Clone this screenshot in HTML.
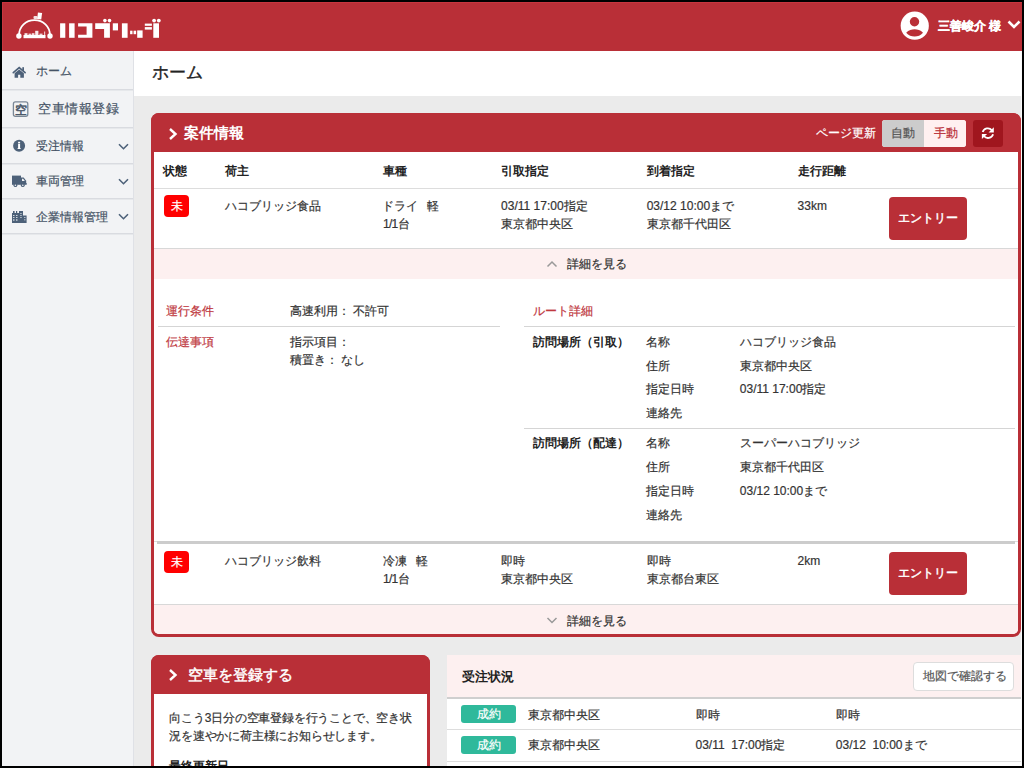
<!DOCTYPE html>
<html lang="ja"><head><meta charset="utf-8"><title>ホーム</title>
<style>
html,body{margin:0;padding:0;width:1024px;height:768px;overflow:hidden;background:#000}
body{position:relative;font-family:"Liberation Sans",sans-serif}
body>div{position:absolute}
.t{position:absolute;line-height:20px;white-space:nowrap;-webkit-text-stroke:0.2px}
</style></head><body>
<div style="left:0px;top:0px;width:1024px;height:768px;background:#ebebeb"></div>
<div style="left:0px;top:0px;width:1024px;height:51px;background:#b92f37"></div>
<div style="left:2px;top:2px;width:1020px;height:1px;background:#c8363f"></div>
<div style="left:2px;top:2px;width:1px;height:49px;background:#c8363f"></div>
<div style="left:0px;top:51px;width:133px;height:717px;background:#f2f3f5"></div>
<div style="left:133px;top:51px;width:1px;height:717px;background:#dfe1e6"></div>
<div style="left:2px;top:89px;width:131px;height:1px;background:#d9dbe0"></div>
<div style="left:2px;top:90px;width:131px;height:1px;background:#e6e8eb"></div>
<div style="left:2px;top:127px;width:131px;height:1px;background:#d9dbe0"></div>
<div style="left:2px;top:128px;width:131px;height:1px;background:#e6e8eb"></div>
<div style="left:2px;top:163px;width:131px;height:1px;background:#d9dbe0"></div>
<div style="left:2px;top:164px;width:131px;height:1px;background:#e6e8eb"></div>
<div style="left:2px;top:198px;width:131px;height:1px;background:#d9dbe0"></div>
<div style="left:2px;top:199px;width:131px;height:1px;background:#e6e8eb"></div>
<div style="left:2px;top:233px;width:131px;height:1px;background:#d9dbe0"></div>
<div style="left:2px;top:234px;width:131px;height:1px;background:#e6e8eb"></div>
<div style="left:134px;top:51px;width:890px;height:45px;background:#fff"></div>
<svg style="position:absolute;left:0px;top:0px" width="170" height="50" viewBox="0 0 170 50"><path d="M19 35.5 C19 26 26 20.2 34.5 20.2 C43 20.2 50 26 50 35.5" fill="none" stroke="#fff" stroke-width="1.8"/><circle cx="18.9" cy="36" r="2.7" fill="#fff"/><circle cx="50" cy="36" r="2.7" fill="#fff"/><rect x="23.5" y="35" width="22" height="3.2" fill="#fff"/><rect x="24.5" y="33.2" width="3" height="2" fill="#fff" opacity=".9"/><rect x="28.5" y="33.6" width="3" height="1.6" fill="#fff" opacity=".8"/><rect x="32" y="33.2" width="2.5" height="2" fill="#fff" opacity=".85"/><rect x="35.2" y="30.8" width="3.2" height="4.5" fill="#fff" opacity=".9"/><rect x="39.5" y="33.6" width="3" height="1.6" fill="#fff" opacity=".8"/><rect x="44" y="31.5" width="1.2" height="3.8" fill="#fff" opacity=".7"/><rect x="37.5" y="12.8" width="4.2" height="6.5" fill="#fff" transform="rotate(8 39.6 16)"/><rect x="33.5" y="16" width="4" height="3" rx="1" fill="#fff" opacity=".85"/><rect x="60.1" y="23.3" width="5.2" height="14.5" fill="#fff"/><rect x="69.1" y="23.3" width="5.5" height="14.5" fill="#fff"/><path d="M78.1 23.3 H92.4 V37.8 H78.1 V34.8 H86.6 V26.6 H78.1 Z" fill="#fff"/><path d="M95.2 23.3 H109.9 V37.8 H104.1 V29 H95.2 Z" fill="#fff"/><circle cx="104.9" cy="20.6" r="1.8" fill="#fff"/><circle cx="109.5" cy="20.6" r="1.8" fill="#fff"/><rect x="112.8" y="23.3" width="5.2" height="7.1" fill="#fff"/><rect x="121.9" y="23.3" width="5.7" height="14.5" fill="#fff"/><rect x="130.1" y="30.7" width="2.4" height="3.5" fill="#fff"/><rect x="133.6" y="30.7" width="2.5" height="3.5" fill="#fff"/><rect x="137.2" y="30.4" width="5.4" height="7.4" fill="#fff"/><rect x="144.8" y="23.6" width="7.1" height="2.2" fill="#fff"/><rect x="144.8" y="27.1" width="7.1" height="2.5" fill="#fff"/><rect x="153.3" y="23.3" width="5.7" height="14.5" fill="#fff"/><circle cx="154.1" cy="20.6" r="1.9" fill="#fff"/><circle cx="158.8" cy="20.6" r="1.9" fill="#fff"/></svg>
<svg style="position:absolute;left:895px;top:6px" width="40" height="40" viewBox="0 0 40 40"><circle cx="19.75" cy="19.7" r="14.1" fill="#fff"/><circle cx="19.5" cy="15.8" r="4.7" fill="#b92f37"/><path d="M11.2 26.7 C13.5 24 17 23.3 19.6 23.3 C22.2 23.3 25.7 24 28 26.7 C25.6 29.6 22.8 30.4 19.6 30.4 C16.4 30.4 13.6 29.6 11.2 26.7 Z" fill="#b92f37"/></svg>
<div class="t" style="left:937.8px;top:15.5px;font-size:12px;color:#fff;font-weight:bold;-webkit-text-stroke:0;-webkit-text-stroke:0.3px;">三善峻介 様</div>
<svg style="position:absolute;left:1004px;top:18px" width="20" height="14" viewBox="0 0 20 14"><path d="M4.5 3.5 L10 9 L15.5 3.5" fill="none" stroke="#fff" stroke-width="2.6"/></svg>
<svg style="position:absolute;left:8px;top:60px" width="24" height="24" viewBox="0 0 24 24"><path d="M5.3 12.6 L11.2 7.6 L17.1 12.6" fill="none" stroke="#4d6179" stroke-width="1.7" stroke-linecap="round"/><rect x="14.3" y="7.2" width="1.7" height="3.6" fill="#4d6179"/><path d="M6.6 13.2 L11.2 9.4 L15.9 13.2 V17.8 H12.3 V14.7 H10.1 V17.8 H6.6 Z" fill="#4d6179"/></svg>
<div class="t" style="left:36.3px;top:61.4px;font-size:12px;color:#465466;">ホーム</div>
<svg style="position:absolute;left:8px;top:96px" width="26" height="26" viewBox="0 0 26 26"><rect x="5.4" y="5.9" width="14.4" height="14.4" rx="2" fill="none" stroke="#7a8796" stroke-width="1.3"/></svg>
<div class="t" style="left:13.8px;top:99.8px;font-size:11.5px;color:#465466;width:13.6px;text-align:center;-webkit-text-stroke:0.5px;">空</div>
<div class="t" style="left:38.2px;top:98.5px;font-size:13px;color:#465466;letter-spacing:0.55px;">空車情報登録</div>
<svg style="position:absolute;left:8px;top:134px" width="24" height="24" viewBox="0 0 24 24"><circle cx="11.1" cy="11.7" r="6" fill="#4d6179"/><rect x="10.1" y="9.8" width="2" height="5" fill="#fff"/><rect x="10.1" y="7.8" width="2" height="1.5" fill="#fff"/><rect x="9.6" y="14" width="3" height="1" fill="#fff"/></svg>
<div class="t" style="left:36.1px;top:135.6px;font-size:12px;color:#465466;">受注情報</div>
<svg style="position:absolute;left:8px;top:170px" width="24" height="24" viewBox="0 0 24 24"><rect x="4" y="5.6" width="9" height="8.9" fill="#4d6179"/><path d="M13 7.6 H15.6 L18.2 10.8 V14.5 H13 Z" fill="#4d6179"/><path d="M14 8.8 H15.1 L16.8 10.9 H14 Z" fill="#f2f3f5"/><rect x="4" y="13.2" width="14.8" height="1.4" fill="#4d6179"/><circle cx="7.4" cy="15.2" r="1.9" fill="#4d6179"/><circle cx="7.4" cy="15.2" r=".8" fill="#f2f3f5"/><circle cx="14.8" cy="15.2" r="1.9" fill="#4d6179"/><circle cx="14.8" cy="15.2" r=".8" fill="#f2f3f5"/></svg>
<div class="t" style="left:36.1px;top:171.1px;font-size:12px;color:#465466;">車両管理</div>
<svg style="position:absolute;left:8px;top:205px" width="24" height="24" viewBox="0 0 24 24"><rect x="4" y="8" width="7" height="10" fill="#4d6179"/><rect x="5" y="6" width="1.6" height="2.5" fill="#4d6179"/><rect x="8" y="6" width="1.2" height="2.5" fill="#4d6179"/><rect x="11" y="6" width="4" height="12" fill="#4d6179"/><rect x="15" y="10.5" width="3.6" height="7.5" fill="#4d6179"/><rect x="5" y="10" width="1.5" height="1" fill="#cfd5dc"/><rect x="8" y="10" width="1.5" height="1" fill="#cfd5dc"/><rect x="5" y="12" width="1.5" height="1" fill="#cfd5dc"/><rect x="8" y="12" width="1.5" height="1" fill="#cfd5dc"/><rect x="5" y="14" width="1.5" height="2" fill="#a9b4c0"/><rect x="8" y="14" width="1.5" height="2" fill="#a9b4c0"/><rect x="12.3" y="8" width="1.3" height="1" fill="#cfd5dc"/><rect x="12.3" y="10" width="1.3" height="1" fill="#cfd5dc"/><rect x="12.3" y="12" width="1.3" height="1" fill="#cfd5dc"/><rect x="16.2" y="12" width="1.2" height="1" fill="#cfd5dc"/><rect x="16.2" y="14" width="1.2" height="1.5" fill="#a9b4c0"/></svg>
<div class="t" style="left:36.1px;top:206.7px;font-size:12px;color:#465466;">企業情報管理</div>
<svg style="position:absolute;left:115px;top:141.2px" width="16" height="12" viewBox="0 0 16 12"><path d="M4 3.2 L8.5 7.7 L13 3.2" fill="none" stroke="#4d6179" stroke-width="1.6"/></svg>
<svg style="position:absolute;left:115px;top:176.2px" width="16" height="12" viewBox="0 0 16 12"><path d="M4 3.2 L8.5 7.7 L13 3.2" fill="none" stroke="#4d6179" stroke-width="1.6"/></svg>
<svg style="position:absolute;left:115px;top:211.2px" width="16" height="12" viewBox="0 0 16 12"><path d="M4 3.2 L8.5 7.7 L13 3.2" fill="none" stroke="#4d6179" stroke-width="1.6"/></svg>
<div class="t" style="left:152.1px;top:62.6px;font-size:17px;color:#222;-webkit-text-stroke:0.35px;">ホーム</div>
<div style="left:151px;top:113px;width:870px;height:524px;background:#fff;border:3px solid #b92f37;border-radius:8px;box-sizing:border-box"></div>
<div style="left:151px;top:113px;width:870px;height:39px;background:#b92f37;border-radius:8px 8px 0 0"></div>
<svg style="position:absolute;left:164px;top:124px" width="18" height="20" viewBox="0 0 18 20"><path d="M6 5 L11.5 10 L6 15" fill="none" stroke="#fff" stroke-width="2.4"/></svg>
<div class="t" style="left:184.3px;top:123.4px;font-size:15px;color:#fff;font-weight:bold;-webkit-text-stroke:0;">案件情報</div>
<div class="t" style="left:816.3px;top:123.1px;font-size:12px;color:#fff;">ページ更新</div>
<div style="left:882px;top:120px;width:84px;height:27px;background:#fff;border-radius:3px"></div>
<div style="left:882px;top:120px;width:41.5px;height:27px;background:#cccccc;border-radius:3px 0 0 3px"></div>
<div style="left:923.5px;top:120px;width:42.3px;height:27px;background:#fff0f0;border-radius:0 3px 3px 0"></div>
<div class="t" style="left:891.3px;top:123.3px;font-size:12px;color:#555;">自動</div>
<div class="t" style="left:933.5px;top:123.3px;font-size:12px;color:#b92f37;">手動</div>
<div style="left:973.3px;top:120.1px;width:29.4px;height:26.6px;background:#a0161e;border-radius:3px"></div>
<svg style="position:absolute;left:976px;top:121px" width="24" height="24" viewBox="0 0 24 24"><path d="M6.7 11.1 A5.3 5.3 0 0 1 15.9 9.3" fill="none" stroke="#fff" stroke-width="1.8"/><path d="M17.8 6.2 V11.4 H12.6 Z" fill="#fff"/><path d="M17.1 13.2 A5.3 5.3 0 0 1 7.9 15" fill="none" stroke="#fff" stroke-width="1.8"/><path d="M5.9 18.1 V12.9 H11.1 Z" fill="#fff"/></svg>
<div class="t" style="left:163.2px;top:160.9px;font-size:12px;color:#222;font-weight:bold;-webkit-text-stroke:0;">状態</div>
<div class="t" style="left:224.7px;top:160.9px;font-size:12px;color:#222;font-weight:bold;-webkit-text-stroke:0;">荷主</div>
<div class="t" style="left:383px;top:160.9px;font-size:12px;color:#222;font-weight:bold;-webkit-text-stroke:0;">車種</div>
<div class="t" style="left:501.1px;top:160.9px;font-size:12px;color:#222;font-weight:bold;-webkit-text-stroke:0;">引取指定</div>
<div class="t" style="left:646.7px;top:160.9px;font-size:12px;color:#222;font-weight:bold;-webkit-text-stroke:0;">到着指定</div>
<div class="t" style="left:797.6px;top:160.9px;font-size:12px;color:#222;font-weight:bold;-webkit-text-stroke:0;">走行距離</div>
<div style="left:154px;top:187.5px;width:864px;height:1px;background:#dddddd"></div>
<div style="left:163.8px;top:195.2px;width:25.5px;height:22px;background:#ff0000;border-radius:4px"></div>
<div class="t" style="left:163.8px;top:196.1px;font-size:12px;color:#fff;width:25.5px;text-align:center;">未</div>
<div class="t" style="left:224.7px;top:196.2px;font-size:12px;color:#333333;">ハコブリッジ食品</div>
<div class="t" style="left:381.6px;top:196.2px;font-size:12px;color:#333333;">ドライ</div>
<div class="t" style="left:427.3px;top:196.2px;font-size:12px;color:#333333;">軽</div>
<div class="t" style="left:383px;top:213.8px;font-size:12px;color:#333333;letter-spacing:-0.7px;">1/1台</div>
<div class="t" style="left:501.1px;top:196.2px;font-size:12px;color:#333333;">03/11 17:00指定</div>
<div class="t" style="left:501.1px;top:213.8px;font-size:12px;color:#333333;">東京都中央区</div>
<div class="t" style="left:646.7px;top:196.2px;font-size:12px;color:#333333;">03/12 10:00まで</div>
<div class="t" style="left:646.7px;top:213.8px;font-size:12px;color:#333333;">東京都千代田区</div>
<div class="t" style="left:797.6px;top:196.2px;font-size:12px;color:#333333;">33km</div>
<div style="left:889px;top:197px;width:78px;height:43px;background:#b92f37;border-radius:4px"></div>
<div class="t" style="left:898.3px;top:208.3px;font-size:12px;color:#fff;-webkit-text-stroke:0.45px;">エントリー</div>
<div style="left:154px;top:248px;width:864px;height:1px;background:#d8d8d8"></div>
<div style="left:154px;top:249px;width:864px;height:29.5px;background:#fdf0f0"></div>
<svg style="position:absolute;left:544px;top:257px" width="16" height="14" viewBox="0 0 16 14"><path d="M3.5 9.5 L8 5 L12.5 9.5" fill="none" stroke="#999" stroke-width="1.5"/></svg>
<div class="t" style="left:566.9px;top:254.3px;font-size:12px;color:#333;">詳細を見る</div>
<div class="t" style="left:166.3px;top:301.4px;font-size:12px;color:#c0393f;">運行条件</div>
<div class="t" style="left:289.7px;top:301.4px;font-size:12px;color:#333333;">高速利用：&nbsp;不許可</div>
<div style="left:157.8px;top:326.3px;width:342px;height:1px;background:#d5d5d5"></div>
<div class="t" style="left:166.3px;top:331.7px;font-size:12px;color:#c0393f;">伝達事項</div>
<div class="t" style="left:289.7px;top:331.7px;font-size:12px;color:#333333;">指示項目：</div>
<div class="t" style="left:289.7px;top:350.0px;font-size:12px;color:#333333;">積置き：&nbsp;なし</div>
<div class="t" style="left:533.4px;top:301.4px;font-size:12px;color:#c0393f;">ルート詳細</div>
<div style="left:524.2px;top:326.3px;width:490.5px;height:1px;background:#d5d5d5"></div>
<div class="t" style="left:533.4px;top:332.0px;font-size:12px;color:#222;font-weight:bold;-webkit-text-stroke:0;">訪問場所（引取）</div>
<div class="t" style="left:645.9px;top:332.0px;font-size:12px;color:#333333;">名称</div>
<div class="t" style="left:739.8px;top:332.0px;font-size:12px;color:#333333;">ハコブリッジ食品</div>
<div class="t" style="left:645.9px;top:355.55px;font-size:12px;color:#333333;">住所</div>
<div class="t" style="left:739.8px;top:355.55px;font-size:12px;color:#333333;">東京都中央区</div>
<div class="t" style="left:645.9px;top:379.1px;font-size:12px;color:#333333;">指定日時</div>
<div class="t" style="left:739.8px;top:379.1px;font-size:12px;color:#333333;">03/11 17:00指定</div>
<div class="t" style="left:645.9px;top:402.65px;font-size:12px;color:#333333;">連絡先</div>
<div style="left:524.2px;top:427.5px;width:490.5px;height:1px;background:#d5d5d5"></div>
<div class="t" style="left:533.4px;top:433.3px;font-size:12px;color:#222;font-weight:bold;-webkit-text-stroke:0;">訪問場所（配達）</div>
<div class="t" style="left:645.9px;top:433.3px;font-size:12px;color:#333333;">名称</div>
<div class="t" style="left:739.8px;top:433.3px;font-size:12px;color:#333333;">スーパーハコブリッジ</div>
<div class="t" style="left:645.9px;top:457.3px;font-size:12px;color:#333333;">住所</div>
<div class="t" style="left:739.8px;top:457.3px;font-size:12px;color:#333333;">東京都千代田区</div>
<div class="t" style="left:645.9px;top:481.3px;font-size:12px;color:#333333;">指定日時</div>
<div class="t" style="left:739.8px;top:481.3px;font-size:12px;color:#333333;">03/12 10:00まで</div>
<div class="t" style="left:645.9px;top:505.3px;font-size:12px;color:#333333;">連絡先</div>
<div style="left:154px;top:540.5px;width:864px;height:1px;background:#dddddd"></div>
<div style="left:157px;top:540.5px;width:858px;height:3px;background:#cccccc"></div>
<div style="left:163.8px;top:551.0px;width:25.5px;height:22px;background:#ff0000;border-radius:4px"></div>
<div class="t" style="left:163.8px;top:551.9px;font-size:12px;color:#fff;width:25.5px;text-align:center;">未</div>
<div class="t" style="left:224.7px;top:551.2px;font-size:12px;color:#333333;">ハコブリッジ飲料</div>
<div class="t" style="left:382.6px;top:551.2px;font-size:12px;color:#333333;">冷凍</div>
<div class="t" style="left:415.8px;top:551.2px;font-size:12px;color:#333333;">軽</div>
<div class="t" style="left:383px;top:568.8px;font-size:12px;color:#333333;letter-spacing:-0.7px;">1/1台</div>
<div class="t" style="left:501.1px;top:551.2px;font-size:12px;color:#333333;">即時</div>
<div class="t" style="left:501.1px;top:568.8px;font-size:12px;color:#333333;">東京都中央区</div>
<div class="t" style="left:646.7px;top:551.2px;font-size:12px;color:#333333;">即時</div>
<div class="t" style="left:646.7px;top:568.8px;font-size:12px;color:#333333;">東京都台東区</div>
<div class="t" style="left:797.6px;top:551.2px;font-size:12px;color:#333333;">2km</div>
<div style="left:889px;top:552px;width:78px;height:43px;background:#b92f37;border-radius:4px"></div>
<div class="t" style="left:898.3px;top:563.3px;font-size:12px;color:#fff;-webkit-text-stroke:0.45px;">エントリー</div>
<div style="left:154px;top:604px;width:864px;height:1px;background:#d8d8d8"></div>
<div style="left:154px;top:605px;width:864px;height:29px;background:#fdf0f0;border-radius:0 0 5px 5px"></div>
<svg style="position:absolute;left:544px;top:613px" width="16" height="14" viewBox="0 0 16 14"><path d="M3.5 5 L8 9.5 L12.5 5" fill="none" stroke="#999" stroke-width="1.5"/></svg>
<div class="t" style="left:566.9px;top:610.7px;font-size:12px;color:#333;">詳細を見る</div>
<div style="left:151px;top:655px;width:279px;height:130px;background:#fff;border:3px solid #b92f37;border-radius:8px;box-sizing:border-box"></div>
<div style="left:151px;top:655px;width:279px;height:39px;background:#b92f37;border-radius:8px 8px 0 0"></div>
<svg style="position:absolute;left:164px;top:665px" width="18" height="20" viewBox="0 0 18 20"><path d="M6 5 L11.5 10 L6 15" fill="none" stroke="#fff" stroke-width="2.4"/></svg>
<div class="t" style="left:188.2px;top:664.9px;font-size:15px;color:#fff;-webkit-text-stroke:0.45px;">空車を登録する</div>
<div class="t" style="left:169.3px;top:707.9px;font-size:12px;color:#333333;letter-spacing:-0.2px;">向こう3日分の空車登録を行うことで、空き状</div>
<div class="t" style="left:169.3px;top:725.9px;font-size:12px;color:#333333;letter-spacing:-0.2px;">況を速やかに荷主様にお知らせします。</div>
<div class="t" style="left:169.3px;top:755.9px;font-size:12px;color:#222;font-weight:bold;-webkit-text-stroke:0;">最終更新日</div>
<div style="left:447px;top:655px;width:574px;height:120px;background:#fff"></div>
<div style="left:447px;top:655px;width:574px;height:42px;background:#fdf0f0"></div>
<div style="left:447px;top:697px;width:574px;height:2px;background:#cfcfcf"></div>
<div class="t" style="left:461.7px;top:666.5px;font-size:13px;color:#222;font-weight:bold;-webkit-text-stroke:0;">受注状況</div>
<div style="left:912.9px;top:662.4px;width:101.4px;height:28.2px;background:#fff;border:1px solid #dddddd;border-radius:4px;box-sizing:border-box"></div>
<div class="t" style="left:922.7px;top:666.1px;font-size:11.5px;color:#555;">地図で確認する</div>
<div style="left:461.4px;top:704.6px;width:54.7px;height:18.6px;background:#2fb99b;border-radius:3px"></div>
<div class="t" style="left:461.4px;top:703.8px;font-size:12px;color:#fff;width:54.7px;text-align:center;">成約</div>
<div class="t" style="left:528.2px;top:704.9px;font-size:12px;color:#333333;">東京都中央区</div>
<div class="t" style="left:695.5px;top:704.9px;font-size:12px;color:#333333;">即時</div>
<div class="t" style="left:835.8px;top:704.9px;font-size:12px;color:#333333;">即時</div>
<div style="left:447px;top:728.5px;width:574px;height:1px;background:#dddddd"></div>
<div style="left:461.4px;top:735.6px;width:54.7px;height:18.6px;background:#2fb99b;border-radius:3px"></div>
<div class="t" style="left:461.4px;top:734.8px;font-size:12px;color:#fff;width:54.7px;text-align:center;">成約</div>
<div class="t" style="left:528.2px;top:734.9px;font-size:12px;color:#333333;">東京都中央区</div>
<div class="t" style="left:695.5px;top:734.9px;font-size:12px;color:#333333;">03/11&nbsp;&nbsp;17:00指定</div>
<div class="t" style="left:835.8px;top:734.9px;font-size:12px;color:#333333;">03/12&nbsp;&nbsp;10:00まで</div>
<div style="left:447px;top:761.2px;width:574px;height:1px;background:#dddddd"></div>
<div style="left:1021px;top:51px;width:1px;height:717px;background:#fafafa"></div>
<div style="left:0px;top:0px;width:1024px;height:2px;background:#000"></div>
<div style="left:0px;top:766px;width:1024px;height:2px;background:#000"></div>
<div style="left:0px;top:0px;width:2px;height:768px;background:#000"></div>
<div style="left:1022px;top:0px;width:2px;height:768px;background:#000"></div>
</body></html>
